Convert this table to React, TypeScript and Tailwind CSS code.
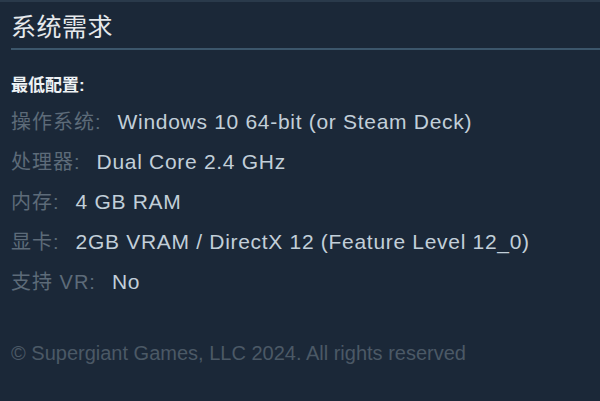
const rows = [
  { label: "操作系统:", value: "Windows 10 64-bit (or Steam Deck)" },
  { label: "处理器:", value: "Dual Core 2.4 GHz" },
  { label: "内存:", value: "4 GB RAM" },
  { label: "显卡:", value: "2GB VRAM / DirectX 12 (Feature Level 12_0)" },
  { label: "支持 VR:", value: "No" },
];

const cjk = { fontFamily: '"Liberation Sans", "Noto Sans CJK SC", sans-serif' };

const App = () => {
  return (
    <div className="w-[600px] h-[401px] bg-[#1b2838] border-t-2 border-[#2a3a4b] overflow-hidden" style={cjk}>
      <div className="pl-[11px]">
        <h2 className="pt-[9px] text-[25px] leading-[32px] text-[#e6e9ec] tracking-[0.5px]">系统需求</h2>
        <div className="mt-[5px] h-[2px] bg-[#3c566b]" />

        <div className="mt-[26px] text-[17px] leading-[20px] font-bold text-[#eef2f5]">最低配置:</div>

        <ul className="mt-[6px]">
          {rows.map((row) => (
            <li key={row.label} className="flex items-baseline leading-[40px]">
              <span className="text-[20px] text-[#5d6b79] tracking-[1px]">{row.label}</span>
              <span className="ml-[16px] text-[21px] text-[#c2cfd9] tracking-[0.7px]">{row.value}</span>
            </li>
          ))}
        </ul>

        <p className="mt-[31px] text-[20px] leading-[40px] text-[#4b5966]">
          © Supergiant Games, LLC 2024. All rights reserved
        </p>
      </div>
    </div>
  );
};

export default App;
